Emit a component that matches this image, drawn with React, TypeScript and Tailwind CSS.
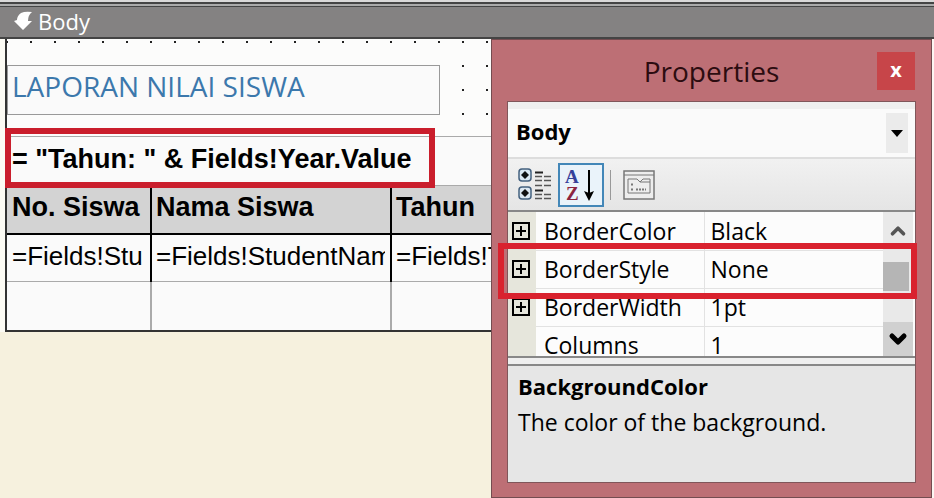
import { ChevronDown, ChevronUp } from 'lucide-react'

const properties = [
  { name: 'BorderColor', value: 'Black', expandable: true },
  { name: 'BorderStyle', value: 'None', expandable: true },
  { name: 'BorderWidth', value: '1pt', expandable: true },
  { name: 'Columns', value: '1', expandable: false },
]

function SectionArrow() {
  return (
    <svg width="20" height="20" viewBox="0 0 20 20" fill="#fff" aria-hidden="true">
      <path d="M7 2 Q11 0 18 1 Q14 4 14 10 L18 10 L9 19 L0 10 L3 9 Q3 5 7 2 Z" />
    </svg>
  )
}

function CategorizedIcon() {
  return (
    <svg width="34" height="34" viewBox="0 0 34 34" fill="none" aria-hidden="true">
      {[1, 19].map((y) => (
        <g key={y}>
          <rect x="1" y={y} width="12" height="12" rx="3" fill="#dce8f2" stroke="#44617f" strokeWidth="1.5" />
          <path d={`M7 ${y + 2} l4 4 l-4 4 l-4 -4 Z`} fill="#111" />
          <path d={`M17 ${y + 3}.5 h8`} stroke="#222" strokeWidth="2" />
          <path d={`M17 ${y + 7}.5 h7 M26 ${y + 7}.5 h7 M17 ${y + 11}.5 h7 M26 ${y + 11}.5 h7`} stroke="#555" strokeWidth="1.5" />
        </g>
      ))}
      <path d="M17 17.5 h7 M26 17.5 h7" stroke="#555" strokeWidth="1.5" />
    </svg>
  )
}

function SortIcon() {
  return (
    <svg width="34" height="36" viewBox="0 0 34 36" aria-hidden="true">
      <text x="1" y="16" fontFamily="Liberation Serif, serif" fontSize="19" fontWeight="700" fill="#35419a">A</text>
      <text x="2" y="33" fontFamily="Liberation Serif, serif" fontSize="19" fontWeight="700" fill="#8c2440">Z</text>
      <path d="M25 3 V28" stroke="#000" strokeWidth="2" />
      <path d="M20 24 L25 26 L30 24 L25 34 Z" />
    </svg>
  )
}

function PagesIcon() {
  return (
    <svg width="32" height="30" viewBox="0 0 32 30" fill="none" stroke="#777" aria-hidden="true">
      <rect x="1" y="1" width="30" height="28" strokeWidth="1.5" fill="#ededed" />
      <path d="M1 5 H31" />
      <path d="M5 23 V9 H14 L17 12 H27 V23 Z M17 12 L20 9 H27 V12" />
      <path d="M8 14.5 h2 M8 19.5 h2 M13 19.5 h10" strokeWidth="2" strokeDasharray="2 1" />
    </svg>
  )
}

function ExpandBox() {
  return (
    <svg width="18" height="18" viewBox="0 0 18 18" fill="none" stroke="#000" aria-hidden="true">
      <rect x="1" y="1" width="16" height="16" strokeWidth="2" />
      <path d="M4 9 H14 M9 4 V14" strokeWidth="2" />
    </svg>
  )
}

function ReportCanvas() {
  return (
    <section className="min-w-0 flex-1 overflow-hidden">
      <div className="bg-[#fcfbf4] pl-[5px]">
        <div className="border-b-2 border-l-2 border-[#333] bg-[#fcfcfb] bg-[radial-gradient(circle_at_1px_1px,#222_1px,transparent_1px)] bg-[length:24px_24px] bg-[position:23px_2px] pt-[26px]">
          <div className="mr-[51px] flex h-[50px] items-center border border-[#999] bg-[#fafafa] pb-2 pl-1 text-[28px] leading-9 text-[#3c78ac]">
            LAPORAN NILAI SISWA
          </div>
          <div className="relative mt-[21px]">
            <table className="w-full table-fixed border-collapse bg-[#fafafa] font-['Liberation_Sans',Arial,sans-serif] leading-8 whitespace-nowrap text-black">
              <colgroup>
                <col className="w-[144px]" />
                <col className="w-[240px]" />
                <col />
              </colgroup>
              <thead className="text-left text-[27px]">
                <tr className="h-[49px] border-y border-[#aaa]">
                  <th colSpan={3} className="pb-1 pl-[5px]">= "Tahun: " &amp; Fields!Year.Value</th>
                </tr>
                <tr className="h-[48px] border-b-2 border-black bg-[#d3d3d3]">
                  <th className="border-r-2 border-black pb-1 pl-[5px]">No. Siswa</th>
                  <th className="border-r-2 border-black pb-1 pl-1">Nama Siswa</th>
                  <th className="pb-1 pl-1">Tahun</th>
                </tr>
              </thead>
              <tbody className="text-[26px]">
                <tr className="h-[48px] border-b border-[#aaa]">
                  <td className="border-r-2 border-black pr-1 pb-1 pl-[5px]">
                    <div className="overflow-hidden">=Fields!Stu</div>
                  </td>
                  <td className="border-r-2 border-black pr-[5px] pb-1 pl-1">
                    <div className="overflow-hidden">=Fields!StudentNam</div>
                  </td>
                  <td className="pb-1 pl-1">
                    <div className="overflow-hidden">=Fields!T</div>
                  </td>
                </tr>
                <tr className="h-[48px]">
                  <td className="border-r-2 border-[#aaa]" />
                  <td className="border-r-2 border-[#aaa]" />
                  <td />
                </tr>
              </tbody>
            </table>
            <div className="pointer-events-none absolute -top-2 -left-0.5 h-[60px] w-[430px] border-6 border-[#ca1e2c]" />
          </div>
        </div>
      </div>
    </section>
  )
}

function PropertyGrid() {
  return (
    <div className="relative border-y-2 border-[#888] bg-[#fcfcfc]">
      <div className="flex h-[144px] overflow-hidden">
        <div className="min-w-0 flex-1">
          <table className="w-full table-fixed text-[23px] whitespace-nowrap">
            <colgroup>
              <col className="w-[28px]" />
              <col className="w-[168px]" />
              <col />
            </colgroup>
            <tbody>
              {properties.map((p) => (
                <tr key={p.name} className="h-[38px]">
                  <td className="bg-[#e6e6dc] pl-1">
                    {p.expandable && (
                      <button aria-label={`Expand ${p.name}`} className="block">
                        <ExpandBox />
                      </button>
                    )}
                  </td>
                  <th scope="row" className="border-r border-b border-[#e2e2e2] pl-2 text-left leading-8 font-normal">
                    {p.name}
                  </th>
                  <td className="border-b border-[#e2e2e2] pl-1.5 leading-8">{p.value}</td>
                </tr>
              ))}
            </tbody>
          </table>
        </div>
        <div className="mr-0.5 flex w-[30px] flex-col items-center bg-[#e9e9e9]">
          <button aria-label="Scroll up" className="flex h-[38px] items-center">
            <ChevronUp size={22} strokeWidth={4} color="#555" />
          </button>
          <div className="mt-3 h-[29px] w-[26px] self-start bg-[#b5b5b5]" />
          <button aria-label="Scroll down" className="mt-auto flex h-[34px] w-full items-center justify-center bg-[#d0d0d0]">
            <ChevronDown size={24} strokeWidth={5} />
          </button>
        </div>
      </div>
      <div className="pointer-events-none absolute top-[31px] -right-0.5 -left-[10px] h-[56px] border-6 border-[#d9222e]" />
    </div>
  )
}

function PropertiesWindow() {
  return (
    <aside className="flex w-[441px] shrink-0 flex-col border border-[#744c50] bg-[#bd6f75] px-[15px] pb-[14px]">
      <header className="relative flex h-[61px] items-center justify-center">
        <h1 className="text-[28px] text-[#2c0c10]">Properties</h1>
        <button
          aria-label="Close"
          className="absolute top-3 right-px flex size-[38px] items-center justify-center bg-[#c74549] pb-0.5 text-xl font-bold text-white"
        >
          x
        </button>
      </header>
      <div className="flex flex-1 flex-col border border-[#80565a] bg-[#efefef]">
        <div className="relative mt-[7px] border-b-2 border-[#ddd]">
          <select aria-label="Object" className="block h-12 w-full appearance-none bg-[#fafafa] pb-1 pl-2 text-[22px] font-bold">
            <option>Body</option>
          </select>
          <div className="pointer-events-none absolute top-1 right-[7px] flex h-10 w-[22px] items-center justify-center bg-[#ebebeb]">
            <svg width="12" height="7" viewBox="0 0 12 7" aria-hidden="true">
              <path d="M0 0 H12 L6 7 Z" />
            </svg>
          </div>
        </div>
        <div className="flex h-[51px] items-center bg-linear-to-b from-[#f1f1f1] to-[#e5e5e5] pl-2.5">
          <button aria-label="Categorized">
            <CategorizedIcon />
          </button>
          <button
            aria-label="Alphabetical"
            className="ml-[6px] flex h-[44px] w-[46px] items-center justify-center border-2 border-[#4387b8] bg-[#eaf3fa]"
          >
            <SortIcon />
          </button>
          <div className="ml-[6px] h-[30px] w-px bg-[#999]" />
          <button aria-label="Property pages" className="ml-3">
            <PagesIcon />
          </button>
        </div>
        <PropertyGrid />
        <div className="mt-[6px] flex-1 border-t-2 border-[#888] bg-[#e6e6e6] px-[10px] pt-0.5 text-[23px] leading-9">
          <h2 className="text-[22px] font-bold">BackgroundColor</h2>
          <p>The color of the background.</p>
        </div>
      </div>
    </aside>
  )
}

export default function App() {
  return (
    <main className="flex min-h-screen flex-col bg-[#f6f1de] font-['Open_Sans','Noto_Sans',sans-serif] text-black">
      <div className="h-[6px] border-b-2 border-[#aaa] bg-[#d8d8d8] pt-0.5">
        <div className="h-0.5 bg-[#444]" />
      </div>
      <div className="flex h-[33px] items-center gap-1 border-t border-b-2 border-[#444] bg-[#848282] pb-0.5 pl-[14px] text-[22px] text-white">
        <SectionArrow />
        Body
      </div>
      <div className="flex flex-1 border-r-2 border-[#fcf6f2]">
        <ReportCanvas />
        <PropertiesWindow />
      </div>
    </main>
  )
}
